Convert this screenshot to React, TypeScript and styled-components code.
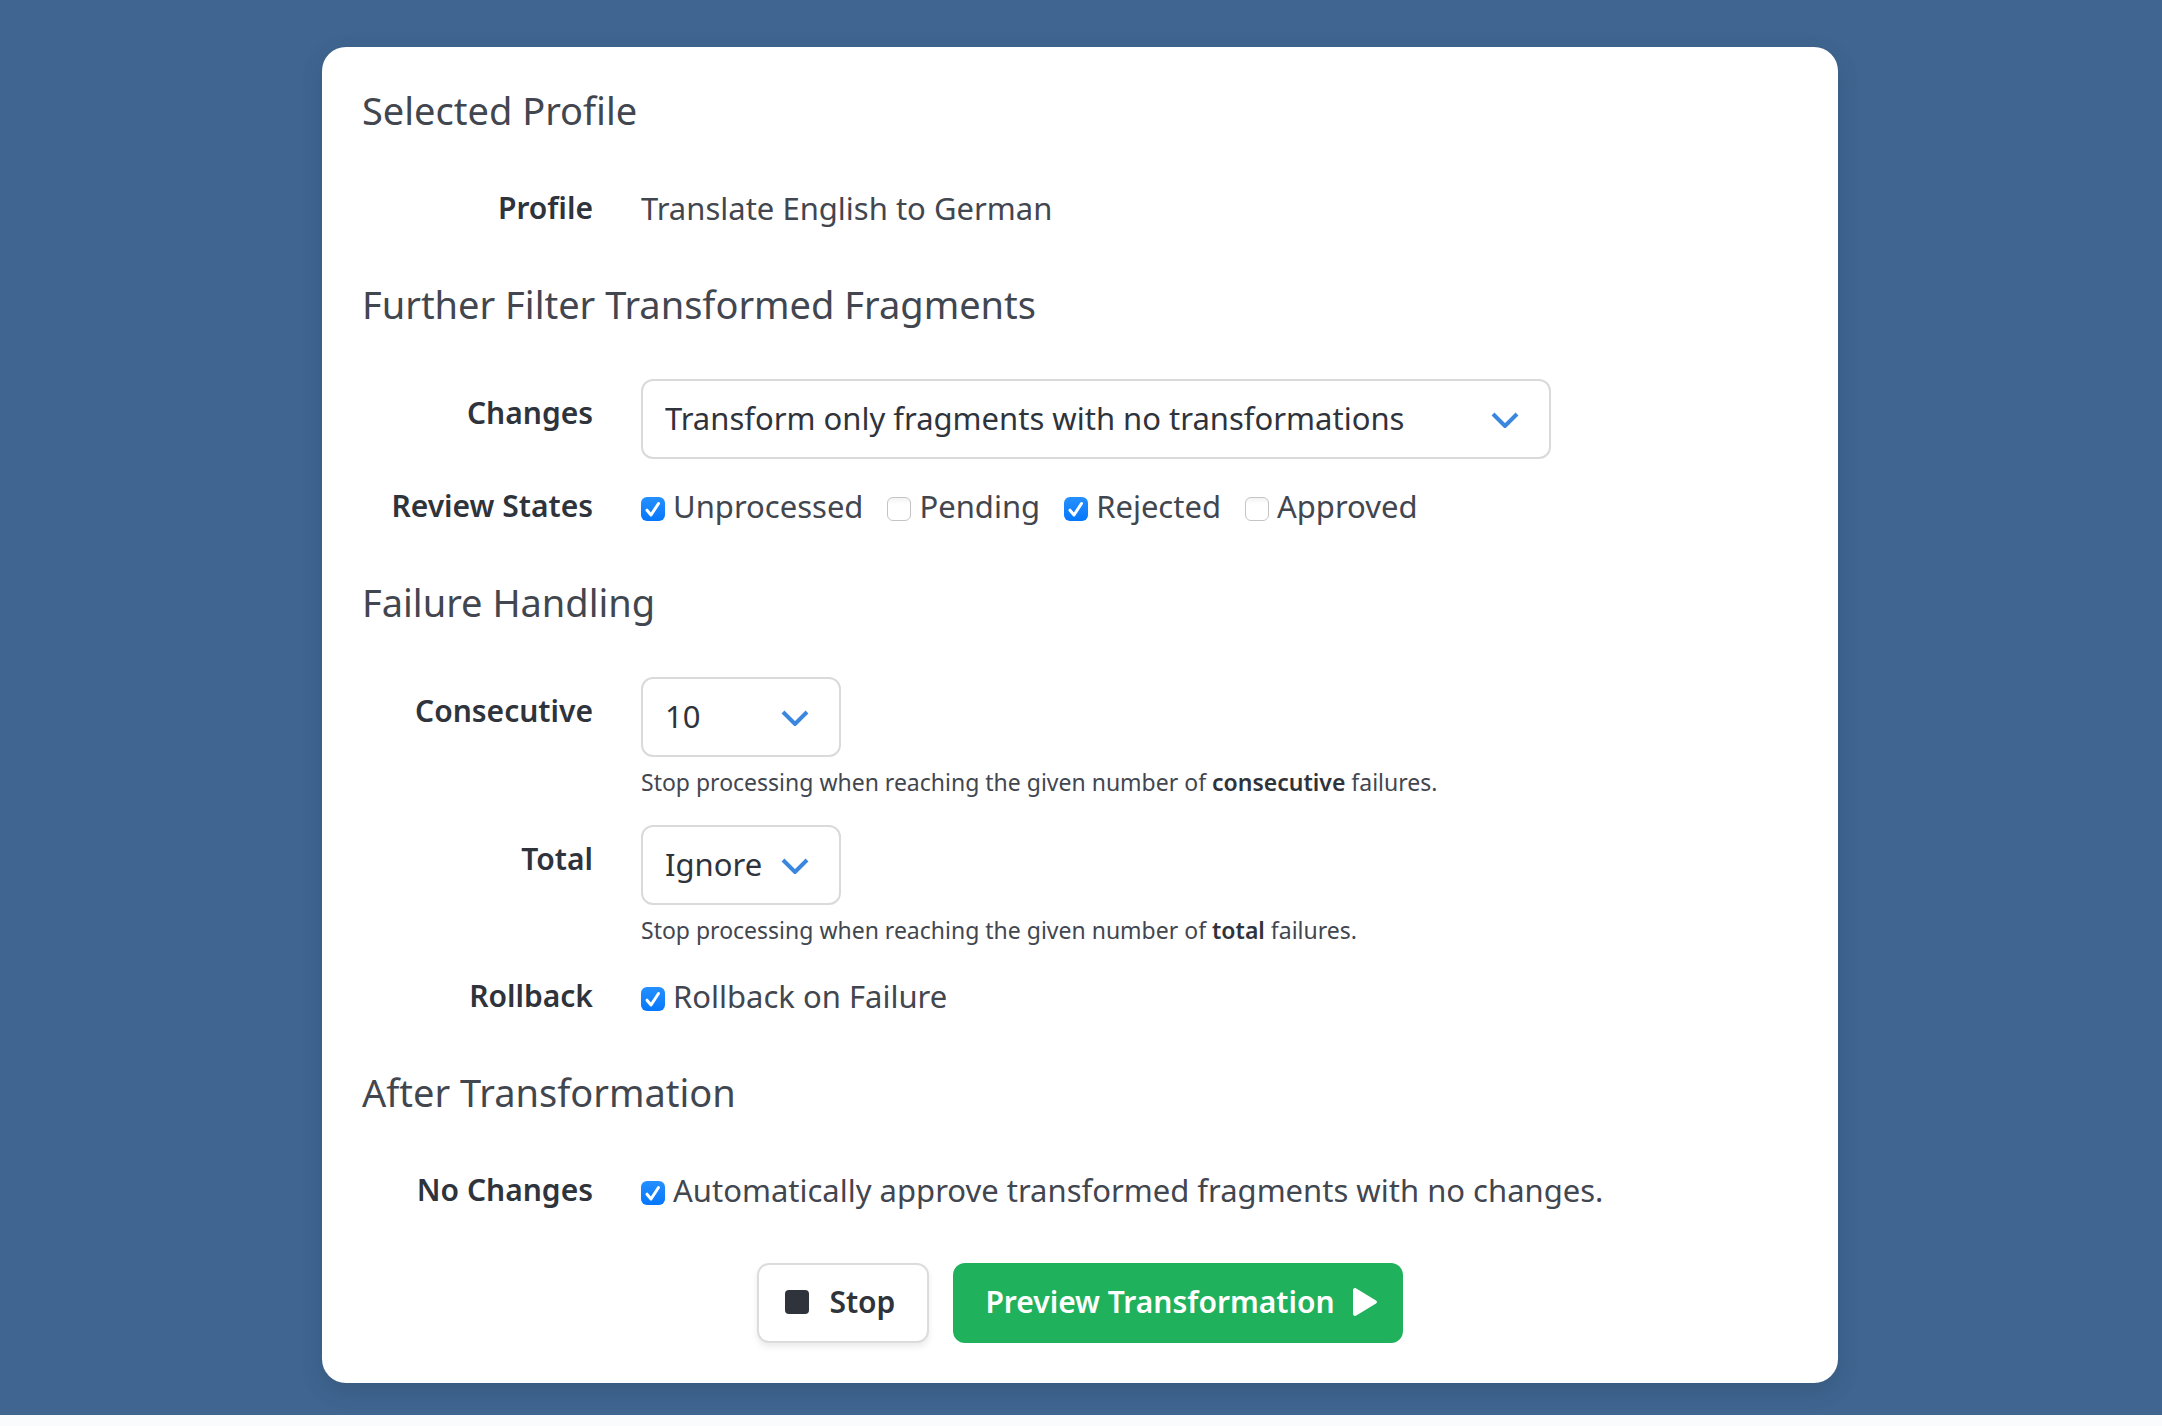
import React, { useId } from "react";
import styled, { createGlobalStyle, css } from "styled-components";

const GlobalStyle = createGlobalStyle`
  *, *::before, *::after { box-sizing: border-box; }
  body {
    margin: 0;
    background: #fafbfd;
    color: #42464f;
    font-family: "Noto Sans", "Open Sans", sans-serif;
    font-size: 31px;
    line-height: 46px;
  }
`;

const Page = styled.main`
  padding: 47px 34px 32px 32px;
  background: #3f6590;
`;

const Card = styled.form`
  max-width: 1516px;
  margin: 0 auto;
  padding: 40px;
  display: flex;
  flex-direction: column;
  gap: 50px;
  background: #fff;
  border-radius: 24px;
  box-shadow: 0 8px 20px rgba(40, 60, 80, 0.26);
`;

const Section = styled.section`
  display: flex;
  flex-direction: column;
  gap: 24px;
`;

const Heading = styled.h2`
  margin: 0 0 28px;
  font-size: 38px;
  font-weight: 400;
  line-height: 46px;
`;

const Row = styled.div`
  display: grid;
  grid-template-columns: 231px minmax(0, 1fr);
  column-gap: 48px;
  align-items: start;
`;

const labelStyle = css<{ $control?: boolean }>`
  padding-top: ${(p) => (p.$control ? "11px" : "0")};
  color: #2f333b;
  font-size: 30px;
  font-weight: 600;
  text-align: right;
  white-space: nowrap;
`;

const Label = styled.label<{ $control?: boolean }>`
  ${labelStyle}
`;

const Caption = styled.div<{ $control?: boolean }>`
  ${labelStyle}
`;

const SelectBox = styled.div<{ $wide?: boolean }>`
  display: grid;
  align-items: center;
  width: ${(p) => (p.$wide ? "910px" : "200px")};
  max-width: 100%;

  > * {
    grid-area: 1 / 1;
  }

  svg {
    justify-self: end;
    margin-right: 32px;
    pointer-events: none;
  }
`;

const Select = styled.select`
  appearance: none;
  width: 100%;
  height: 80px;
  padding: 0 64px 2px 22px;
  border: 2px solid #d9dadc;
  border-radius: 12px;
  background: #fff;
  color: #2f333b;
  font: inherit;
`;

const Help = styled.p`
  margin: 8px 0 2px;
  font-size: 23px;
  line-height: 34px;

  strong {
    color: #2f333b;
    font-weight: 600;
  }
`;

const Options = styled.div`
  display: flex;
  flex-wrap: wrap;
  column-gap: 24px;
`;

const Option = styled.label`
  display: flex;
  align-items: center;
  gap: 8px;
`;

const Tick = styled.span`
  display: grid;
  flex: none;
  margin-top: 6px;

  > * {
    grid-area: 1 / 1;
  }

  svg {
    pointer-events: none;
  }

  input:not(:checked) + svg {
    visibility: hidden;
  }
`;

const Checkbox = styled.input`
  appearance: none;
  width: 24px;
  height: 24px;
  margin: 0;
  border: 1px solid #c4c4c4;
  border-radius: 6px;
  background: linear-gradient(#f3f3f3, #fff 30%);

  &:checked {
    border: 0;
    background: linear-gradient(#2590ff, #0577fb);
  }
`;

const Actions = styled.div`
  display: flex;
  justify-content: center;
  gap: 24px;
`;

const Button = styled.button<{ $primary?: boolean }>`
  display: flex;
  align-items: center;
  gap: ${(p) => (p.$primary ? "18px" : "20px")};
  height: 80px;
  padding: 0 ${(p) => (p.$primary ? "26px 0 32px" : "32px 0 26px")};
  padding-bottom: 2px;
  border: ${(p) => (p.$primary ? "0" : "2px solid #dcdcde")};
  border-radius: 12px;
  background: ${(p) => (p.$primary ? "#20b15c" : "#fff")};
  color: ${(p) => (p.$primary ? "#fff" : "#2f333b")};
  box-shadow: ${(p) => (p.$primary ? "none" : "0 4px 6px rgba(0, 0, 0, 0.08)")};
  font: inherit;
  font-size: 30px;
  font-weight: 600;
  white-space: nowrap;
`;

const Chevron = () => (
  <svg width="28" height="18" viewBox="0 0 28 18" fill="none" aria-hidden="true">
    <path d="M2 4 14 16 26 4" stroke="#3b87de" strokeWidth="4" />
  </svg>
);

interface SelectFieldProps {
  label: string;
  options: string[];
  wide?: boolean;
  children?: React.ReactNode;
}

function SelectField({ label, options, wide, children }: SelectFieldProps) {
  const id = useId();
  return (
    <Row>
      <Label htmlFor={id} $control>{label}</Label>
      <div>
        <SelectBox $wide={wide}>
          <Select id={id}>
            {options.map((o) => <option key={o}>{o}</option>)}
          </Select>
          <Chevron />
        </SelectBox>
        {children && <Help>{children}</Help>}
      </div>
    </Row>
  );
}

function CheckOption({ text, checked }: { text: string; checked?: boolean }) {
  return (
    <Option>
      <Tick>
        <Checkbox type="checkbox" defaultChecked={checked} />
        <svg width="24" height="24" viewBox="0 0 24 24" fill="none" aria-hidden="true">
          <path d="M6 13.2 10 18 17.5 6.5" stroke="#fff" strokeWidth="3" strokeLinecap="round" strokeLinejoin="round" />
        </svg>
      </Tick>
      {text}
    </Option>
  );
}

function CheckField({ label, options }: { label: string; options: { text: string; checked?: boolean }[] }) {
  const id = useId();
  return (
    <Row role="group" aria-labelledby={id}>
      <Caption id={id}>{label}</Caption>
      <Options>
        {options.map((o) => <CheckOption key={o.text} {...o} />)}
      </Options>
    </Row>
  );
}

export default function App() {
  return (
    <>
      <GlobalStyle />
      <Page>
        <Card onSubmit={(e) => e.preventDefault()}>
          <Section>
            <Heading>Selected Profile</Heading>
            <Row>
              <Caption>Profile</Caption>
              <div>Translate English to German</div>
            </Row>
          </Section>

          <Section>
            <Heading>Further Filter Transformed Fragments</Heading>
            <SelectField wide label="Changes" options={["Transform only fragments with no transformations"]} />
            <CheckField
              label="Review States"
              options={[
                { text: "Unprocessed", checked: true },
                { text: "Pending" },
                { text: "Rejected", checked: true },
                { text: "Approved" },
              ]}
            />
          </Section>

          <Section>
            <Heading>Failure Handling</Heading>
            <SelectField label="Consecutive" options={["10"]}>
              Stop processing when reaching the given number of <strong>consecutive</strong> failures.
            </SelectField>
            <SelectField label="Total" options={["Ignore"]}>
              Stop processing when reaching the given number of <strong>total</strong> failures.
            </SelectField>
            <CheckField label="Rollback" options={[{ text: "Rollback on Failure", checked: true }]} />
          </Section>

          <Section>
            <Heading>After Transformation</Heading>
            <CheckField
              label="No Changes"
              options={[{ text: "Automatically approve transformed fragments with no changes.", checked: true }]}
            />
          </Section>

          <Actions>
            <Button type="button">
              <svg width="24" height="24" viewBox="0 0 24 24" aria-hidden="true">
                <rect width="24" height="24" rx="4" fill="#2f333b" />
              </svg>
              Stop
            </Button>
            <Button type="submit" $primary>
              Preview Transformation
              <svg width="24" height="28" viewBox="0 0 24 28" aria-hidden="true">
                <path d="M0 2.2C0 .4 1.8-.5 3.300.5L23 12.500C24.300 13.300 24.300 14.700 23 15.500L3.300 27.500C1.800 28.500 0 27.600 0 25.800Z" fill="#fff" />
              </svg>
            </Button>
          </Actions>
        </Card>
      </Page>
    </>
  );
}
